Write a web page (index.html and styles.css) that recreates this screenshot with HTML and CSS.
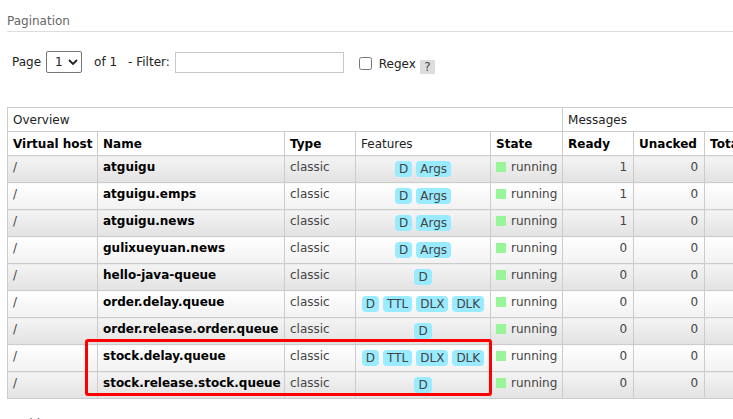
FILE: index.html
```html
<!DOCTYPE html>
<html>
<head>
<meta charset="utf-8">
<link rel="stylesheet" href="styles.css">
</head>
<body>
<div class="page">
  <h2 class="section-title">Pagination</h2>
  <div class="pager">
    <span class="pg-label">Page</span>
    <span class="pg-select"><span>1</span><svg width="10" height="6" viewBox="0 0 10 6"><path d="M1 1 L5 5 L9 1" fill="none" stroke="#222" stroke-width="1.8"/></svg></span>
    <span class="pg-of">of 1</span>
    <span class="pg-filter">- Filter:</span>
    <input class="filter" type="text">
    <input class="regex-box" type="checkbox">
    <span class="regex-label">Regex</span>
    <span class="help">?</span>
  </div>
  <div class="table-wrap">
    <table class="list">
      <colgroup>
        <col class="c-vhost"><col class="c-name"><col class="c-type"><col class="c-feat"><col class="c-state"><col class="c-num"><col class="c-num"><col class="c-num">
      </colgroup>
      <thead>
        <tr class="group-row">
          <th colspan="5">Overview</th>
          <th colspan="3">Messages</th>
        </tr>
        <tr class="head-row">
          <th>Virtual host</th>
          <th>Name</th>
          <th>Type</th>
          <th class="plain">Features</th>
          <th>State</th>
          <th>Ready</th>
          <th>Unacked</th>
          <th>Total</th>
        </tr>
      </thead>
      <tbody>
        <tr class="alt1">
          <td>/</td><td class="name">atguigu</td><td>classic</td>
          <td class="feat"><span class="tag">D</span><span class="tag">Args</span></td>
          <td><span class="status"></span>running</td><td class="num">1</td><td class="num">0</td><td class="num"></td>
        </tr>
        <tr class="alt2">
          <td>/</td><td class="name">atguigu.emps</td><td>classic</td>
          <td class="feat"><span class="tag">D</span><span class="tag">Args</span></td>
          <td><span class="status"></span>running</td><td class="num">1</td><td class="num">0</td><td class="num"></td>
        </tr>
        <tr class="alt1">
          <td>/</td><td class="name">atguigu.news</td><td>classic</td>
          <td class="feat"><span class="tag">D</span><span class="tag">Args</span></td>
          <td><span class="status"></span>running</td><td class="num">1</td><td class="num">0</td><td class="num"></td>
        </tr>
        <tr class="alt2">
          <td>/</td><td class="name">gulixueyuan.news</td><td>classic</td>
          <td class="feat"><span class="tag">D</span><span class="tag">Args</span></td>
          <td><span class="status"></span>running</td><td class="num">0</td><td class="num">0</td><td class="num"></td>
        </tr>
        <tr class="alt1">
          <td>/</td><td class="name">hello-java-queue</td><td>classic</td>
          <td class="feat"><span class="tag">D</span></td>
          <td><span class="status"></span>running</td><td class="num">0</td><td class="num">0</td><td class="num"></td>
        </tr>
        <tr class="alt2">
          <td>/</td><td class="name">order.delay.queue</td><td>classic</td>
          <td class="feat"><span class="tag">D</span><span class="tag">TTL</span><span class="tag">DLX</span><span class="tag">DLK</span></td>
          <td><span class="status"></span>running</td><td class="num">0</td><td class="num">0</td><td class="num"></td>
        </tr>
        <tr class="alt1">
          <td>/</td><td class="name">order.release.order.queue</td><td>classic</td>
          <td class="feat"><span class="tag">D</span></td>
          <td><span class="status"></span>running</td><td class="num">0</td><td class="num">0</td><td class="num"></td>
        </tr>
        <tr class="alt2">
          <td>/</td><td class="name">stock.delay.queue</td><td>classic</td>
          <td class="feat"><span class="tag">D</span><span class="tag">TTL</span><span class="tag">DLX</span><span class="tag">DLK</span></td>
          <td><span class="status"></span>running</td><td class="num">0</td><td class="num">0</td><td class="num"></td>
        </tr>
        <tr class="alt1">
          <td>/</td><td class="name">stock.release.stock.queue</td><td>classic</td>
          <td class="feat"><span class="tag">D</span></td>
          <td><span class="status"></span>running</td><td class="num">0</td><td class="num">0</td><td class="num"></td>
        </tr>
      </tbody>
    </table>
    <div class="highlight"></div>
  </div>
  <h2 class="next-section">Add a new queue</h2>
</div>
</body>
</html>
```
FILE: styles.css
```css
html, body {
  margin: 0;
  padding: 0;
  overflow: hidden;
}
body {
  width: 733px;
  height: 419px;
  background: #fff;
  font-family: "DejaVu Sans", Verdana, sans-serif;
  font-size: 12px;
  color: #444;
}
.page {
  padding-left: 7px;
}
.section-title {
  margin: 0;
  padding: 14px 0 2px 0;
  font-size: 12px;
  line-height: 15px;
  font-weight: normal;
  color: #666;
  border-bottom: 1px solid #ddd;
}
.pager {
  display: flex;
  align-items: center;
  height: 22px;
  margin-top: 19px;
  padding-left: 5px;
  color: #222;
}
.pg-select {
  display: flex;
  align-items: center;
  box-sizing: border-box;
  width: 36px;
  height: 22px;
  margin-left: 5px;
  padding-left: 8px;
  border: 1px solid #767676;
  border-radius: 2px;
  gap: 5px;
}
.pg-of {
  margin-left: 12px;
}
.pg-filter {
  margin-left: 11px;
}
.filter {
  box-sizing: border-box;
  width: 169px;
  height: 21px;
  margin: 0 0 0 5px;
  border: 1px solid #c8c8c8;
  padding: 0;
}
.regex-box {
  width: 13px;
  height: 13px;
  margin: 3px 0 0 15px;
}
.regex-label {
  margin-left: 7px;
  padding-top: 3px;
}
.help {
  align-self: flex-start;
  margin: 9px 0 0 4px;
  width: 15px;
  height: 14px;
  line-height: 15px;
  text-align: center;
  background: #ddd;
  color: #444;
}
.table-wrap {
  position: relative;
  margin-top: 34px;
}
.list {
  border-collapse: collapse;
  table-layout: fixed;
  width: 768px;
  border: 1px solid #ccc;
}
.c-vhost { width: 90px; }
.c-name { width: 187px; }
.c-type { width: 71px; }
.c-feat { width: 135px; }
.c-state { width: 72px; }
.c-num { width: 71px; }
.list th,
.list td {
  border: 1px solid #ccc;
  text-align: left;
  vertical-align: top;
  white-space: nowrap;
  overflow: hidden;
  line-height: 14px;
}
.list th {
  padding: 5px 6px 0 5px;
  color: #000;
  background: #fff;
}
.group-row {
  height: 24px;
}
.group-row th {
  font-weight: normal;
  color: #222;
  padding-top: 5px;
}
.head-row {
  height: 24px;
}
.head-row th.plain {
  font-weight: normal;
  color: #222;
}
.list tbody tr {
  height: 27px;
}
.list td {
  padding: 4px 6px 0 5px;
}
.list td.name {
  font-weight: bold;
  color: #000;
}
.list td.num {
  text-align: right;
}
.list td.feat {
  text-align: center;
  padding-top: 5px;
  padding-left: 0;
  padding-right: 0;
}
.alt1 td {
  background: linear-gradient(to bottom, #f4f4f4 0%, #e2e2e2 100%);
}
.alt2 td {
  background: linear-gradient(to bottom, #ffffff 0%, #f2f2f2 100%);
}
.tag {
  display: inline-block;
  padding: 1px 4px;
  margin: 0 2px;
  line-height: 14px;
  border-radius: 4px;
  background: #99ebff;
  color: #444;
}
.status {
  display: inline-block;
  width: 10px;
  height: 10px;
  margin: 0 5px 0 0;
  background: #99f599;
  vertical-align: -1px;
}
.highlight {
  position: absolute;
  left: 78px;
  top: 232px;
  width: 401px;
  height: 51px;
  border: 3px solid #f00;
  border-radius: 3px;
}
.next-section {
  margin: 18px 0 0 10px;
  font-size: 12px;
  font-weight: normal;
  color: #555;
}
```
